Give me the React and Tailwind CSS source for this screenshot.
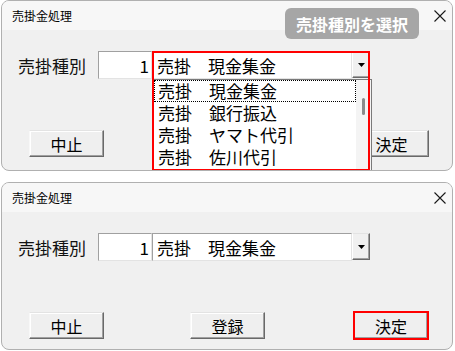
import React from "react";

const F = "font-['Noto_Sans_CJK_JP','Noto_Sans',sans-serif]";

function CloseX() {
  return (
    <svg width="14" height="14" viewBox="0 0 14 14" className="block">
      <path d="M1.5 1.5 L12.5 12.5 M12.5 1.5 L1.5 12.5" stroke="#1a1a1a" strokeWidth="1.1" fill="none" />
    </svg>
  );
}

function Btn({ children, className = "" }) {
  return (
    <div
      className={`h-[27px] w-[75px] flex items-center justify-center bg-[#efefef] border border-t-[#e3e3e3] border-l-[#f8f8f8] border-r-[#696969] border-b-[#696969] shadow-[inset_-1px_-1px_0_#a0a0a0,inset_1px_1px_0_#ffffff] text-[16px] leading-none text-black ${className}`}
    >
      {children}
    </div>
  );
}

function Combo() {
  return (
    <div className="flex h-[28px] w-[218px]">
      <div className="w-[200px] h-[28px] bg-white border border-t-[#a0a0a0] border-l-[#a0a0a0] border-r-[#e3e3e3] border-b-[#e3e3e3] pl-[4px] flex items-center text-[17px] leading-none text-black whitespace-pre">
        売掛　現金集金
      </div>
      <div className="w-[18px] h-[27px] bg-[#f0f0f0] border border-t-[#e3e3e3] border-l-[#ffffff] border-r-[#696969] border-b-[#696969] shadow-[inset_-1px_-1px_0_#a0a0a0] flex items-center justify-center">
        <svg width="7" height="4" viewBox="0 0 7 4" className="block">
          <path d="M0 0 H7 L3.5 4 Z" fill="#000" />
        </svg>
      </div>
    </div>
  );
}

function Window({ top, height }) {
  return (
    <div className={`relative ${height} rounded-[8px] border border-[#b0b0b0] bg-[#f0f0f0] overflow-hidden ${F}`}>
      <div className="h-[29px] bg-[#f7f7f7] flex items-center justify-between pl-[10px] pr-[5px]">
        <span className="text-[12px] leading-none text-black">売掛金処理</span>
        <CloseX />
      </div>
      <div className="pt-[21px] pl-[16px] flex items-center">
        <div className="w-[80px] text-[17px] leading-none text-[#111]">売掛種別</div>
        <div className="w-[54px] h-[28px] bg-white border border-t-[#a0a0a0] border-l-[#a0a0a0] border-r-[#e3e3e3] border-b-[#e3e3e3] flex items-center justify-end pr-[2px] text-[17px] leading-none text-black">
          1
        </div>
        <Combo />
      </div>
      <div className="pt-[51px] pl-[27px] flex items-start">
        <Btn>中止</Btn>
        <Btn className={`ml-[86px] ${top ? "invisible" : ""}`}>登録</Btn>
        {top ? (
          <Btn className="ml-[89px]">決定</Btn>
        ) : (
          <div className="ml-[88px] -mt-[1px] h-[29px] w-[76px] border-2 border-[#ff0000] bg-[#efefef] flex items-center justify-center text-[16px] leading-none text-black shadow-[inset_-1px_-1px_0_#a0a0a0]">
            決定
          </div>
        )}
      </div>

      {top && (
        <>
          <div className="absolute left-[283px] top-[7px] w-[134px] h-[31px] rounded-[6px] bg-[#a6a6a6] flex items-center justify-center text-white font-bold text-[16px] leading-none">
            売掛種別を選択
          </div>
          <div className="absolute left-[151px] top-[78px] w-[219px] h-[92px] bg-white border border-[#7a7a7a] flex">
            <div className="w-[202px] flex flex-col text-[17px] text-black">
              {["売掛　現金集金", "売掛　銀行振込", "売掛　ヤマト代引", "売掛　佐川代引"].map((t, i) => (
                <div
                  key={t}
                  className={`h-[22px] leading-[20px] pl-[3px] whitespace-pre ${i === 0 ? "border border-dotted border-black" : "border border-transparent"}`}
                >
                  {t}
                </div>
              ))}
            </div>
            <div className="flex-1 bg-[#f4f4f4] flex justify-center pt-[18px]">
              <div className="w-[3px] h-[17px] rounded-full bg-[#8a8a8a]" />
            </div>
          </div>
          <div className="absolute left-[150px] top-[50px] w-[218px] h-[120px] border-2 border-[#ff0000]" />
        </>
      )}
    </div>
  );
}

export default function App() {
  return (
    <div className="w-[455px] h-[351px] bg-white px-[1px] pr-[2px] flex flex-col gap-[11px]">
      <Window top={true} height="h-[171px]" />
      <Window top={false} height="h-[168px]" />
    </div>
  );
}
